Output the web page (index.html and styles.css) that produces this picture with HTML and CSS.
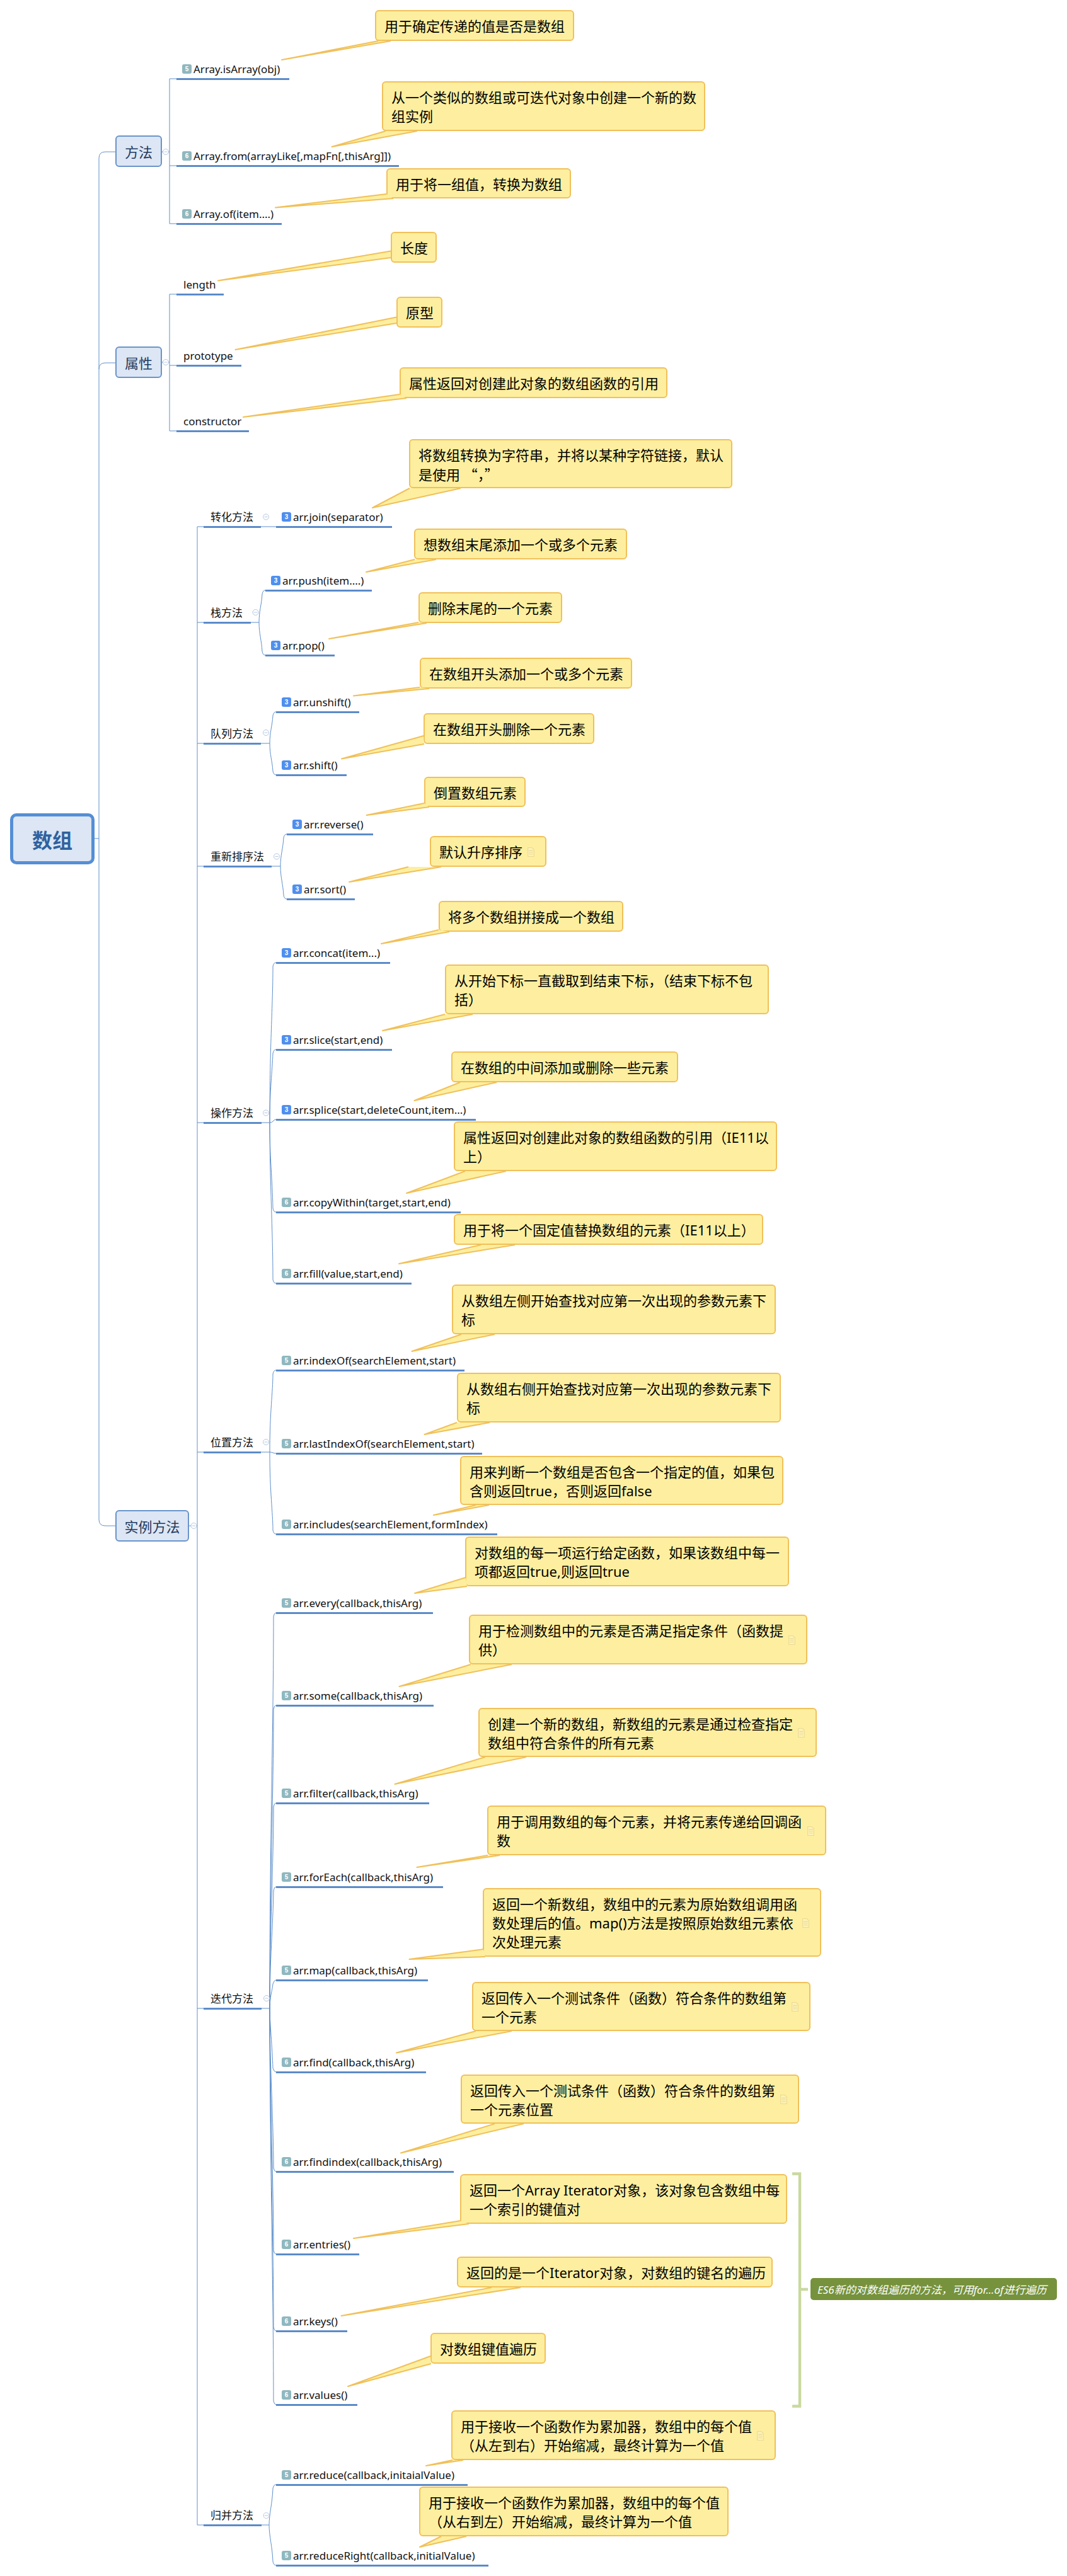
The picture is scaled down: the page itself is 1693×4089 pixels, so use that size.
FILE: index.html
```html
<!DOCTYPE html>
<html lang="zh-CN">
<head>
<meta charset="utf-8">
<title>数组</title>
<link rel="stylesheet" href="styles.css">
</head>
<body>
<main class="canvas">
<svg class="layer" width="1693" height="4089" viewBox="0 0 1693 4089">
<g class="conn">
<path d="M183 241H167Q157 241 157 251V2412Q157 2422 167 2422H183"/>
<path d="M157 586Q157 576 167 576H183"/>
<path d="M150 1331H157"/>
<path d="M257 241H269M280 125H269V355H280M269 263H280"/>
<path d="M257 575H269M280 467H269V684H280M269 580H280"/>
<path d="M300 2422H313M313 836V4008"/>
<path d="M313 836H323M313 988H323M313 1180H323M313 1375H323M313 1782H323M313 2305H323M313 3188H323M313 4008H323"/>
<path d="M414 836H438"/>
<path d="M398 988H411"/>
<path d="M411 988C411 970 415 960 416 943Q417 937 421 937M411 988C411 1006 415 1016 416 1034Q417 1040 421 1040"/>
<path d="M414 1180H428"/>
<path d="M428 1180C428 1162 432 1152 433 1136Q434 1130 438 1130M428 1180C428 1198 432 1208 433 1224Q434 1230 438 1230"/>
<path d="M431 1375H445"/>
<path d="M445 1375C445 1357 449 1347 450 1330Q451 1324 455 1324M445 1375C445 1393 449 1403 450 1421Q451 1427 455 1427"/>
<path d="M414 1782H428"/>
<path d="M428 1782C428 1650 433 1600 433 1534Q434 1528 438 1528M428 1782C428 1730 432 1700 433 1672Q434 1666 438 1666M428 1782Q431 1782 433 1780Q435 1777 438 1777M428 1782C428 1840 432 1870 433 1918Q434 1924 438 1924M428 1782C428 1880 433 1950 433 2031Q434 2037 438 2037"/>
<path d="M414 2305H428"/>
<path d="M428 2305C428 2240 433 2210 433 2181Q434 2175 438 2175M428 2305Q431 2305 433 2306Q435 2307 438 2307M428 2305C428 2370 433 2400 433 2429Q434 2435 438 2435"/>
<path d="M415 3188H428"/>
<path d="M428 3188C428 2900 434 2750 434 2566Q435 2560 438 2560M428 3188C428 3000 434 2850 434 2713Q435 2707 438 2707M428 3188C428 3060 434 2960 434 2868Q435 2862 438 2862M428 3188C428 3110 433 3060 434 3001Q435 2995 438 2995M428 3188C428 3170 432 3160 433 3149Q435 3143 438 3143M428 3188C428 3210 432 3250 433 3283Q435 3289 438 3289M428 3188C428 3280 434 3370 434 3441Q435 3447 438 3447M428 3188C428 3320 434 3460 434 3572Q435 3578 438 3578M428 3188C428 3360 434 3560 434 3694Q435 3700 438 3700M428 3188C428 3400 434 3650 434 3811Q435 3817 438 3817"/>
<path d="M415 4008H427"/>
<path d="M427 4008C427 3990 432 3975 433 3950Q434 3944 438 3944M427 4008C427 4026 432 4041 433 4066Q434 4072 438 4072"/>
</g>
<g class="coll">
<circle cx="263" cy="241" r="4.5"/><path d="M260.5 241h5"/>
<circle cx="263" cy="575" r="4.5"/><path d="M260.5 575h5"/>
<circle cx="307.500" cy="2422" r="4.5"/><path d="M305 2422h5"/>
<circle cx="422" cy="820.500" r="4.5"/><path d="M419.500 820.500h5"/>
<circle cx="405.500" cy="972" r="4.5"/><path d="M403 972h5"/>
<circle cx="422" cy="1163" r="4.5"/><path d="M419.500 1163h5"/>
<circle cx="439" cy="1359.500" r="4.5"/><path d="M436.500 1359.500h5"/>
<circle cx="422" cy="1766.500" r="4.5"/><path d="M419.500 1766.500h5"/>
<circle cx="422" cy="2289" r="4.5"/><path d="M419.500 2289h5"/>
<circle cx="423" cy="3172" r="4.5"/><path d="M420.500 3172h5"/>
<circle cx="422.500" cy="3993" r="4.5"/><path d="M420 3993h5"/>
</g>
<path class="brace" d="M1257 3450.500H1269V3819.500H1257M1269 3634H1282"/>
</svg>

<div class="root" style="left:16px;top:1291px;width:134px;height:81px">数组</div>
<div class="top" style="left:183px;top:215px;width:74px;height:50px">方法</div>
<div class="top" style="left:183px;top:550px;width:74px;height:50px">属性</div>
<div class="top" style="left:183px;top:2397px;width:117px;height:50px">实例方法</div>

<div class="lbl" style="left:280px;top:95px;width:179px"><i class="bdg teal">5</i>Array.isArray(obj)</div>
<div class="lbl" style="left:280px;top:233px;width:353px"><i class="bdg teal">6</i>Array.from(arrayLike[,mapFn[,thisArg]])</div>
<div class="lbl" style="left:280px;top:325px;width:167px"><i class="bdg teal">6</i>Array.of(item....)</div>
<div class="lbl plain" style="left:280px;top:437px;width:75px">length</div>
<div class="lbl plain" style="left:280px;top:550px;width:103px">prototype</div>
<div class="lbl plain" style="left:280px;top:654px;width:115px">constructor</div>

<div class="lbl plain" style="left:323px;top:806px;width:91px">转化方法</div>
<div class="lbl" style="left:438px;top:806px;width:184px"><i class="bdg blue">3</i>arr.join(separator)</div>
<div class="lbl plain" style="left:323px;top:958px;width:75px">栈方法</div>
<div class="lbl" style="left:421px;top:907px;width:169px"><i class="bdg blue">3</i>arr.push(item....)</div>
<div class="lbl" style="left:421px;top:1010px;width:110px"><i class="bdg blue">3</i>arr.pop()</div>
<div class="lbl plain" style="left:323px;top:1150px;width:91px">队列方法</div>
<div class="lbl" style="left:438px;top:1100px;width:132px"><i class="bdg blue">3</i>arr.unshift()</div>
<div class="lbl" style="left:438px;top:1200px;width:112px"><i class="bdg blue">3</i>arr.shift()</div>
<div class="lbl plain" style="left:323px;top:1345px;width:108px">重新排序法</div>
<div class="lbl" style="left:455px;top:1294px;width:137px"><i class="bdg blue">3</i>arr.reverse()</div>
<div class="lbl" style="left:455px;top:1397px;width:108px"><i class="bdg blue">3</i>arr.sort()</div>
<div class="lbl plain" style="left:323px;top:1752px;width:92px">操作方法</div>
<div class="lbl" style="left:438px;top:1498px;width:181px"><i class="bdg blue">3</i>arr.concat(item...)</div>
<div class="lbl" style="left:438px;top:1636px;width:184px"><i class="bdg blue">3</i>arr.slice(start,end)</div>
<div class="lbl" style="left:438px;top:1747px;width:317px"><i class="bdg blue">3</i>arr.splice(start,deleteCount,item...)</div>
<div class="lbl" style="left:438px;top:1894px;width:293px"><i class="bdg teal">6</i>arr.copyWithin(target,start,end)</div>
<div class="lbl" style="left:438px;top:2007px;width:215px"><i class="bdg teal">6</i>arr.fill(value,start,end)</div>
<div class="lbl plain" style="left:323px;top:2275px;width:91px">位置方法</div>
<div class="lbl" style="left:438px;top:2145px;width:299px"><i class="bdg teal">5</i>arr.indexOf(searchElement,start)</div>
<div class="lbl" style="left:438px;top:2277px;width:327px"><i class="bdg teal">5</i>arr.lastIndexOf(searchElement,start)</div>
<div class="lbl" style="left:438px;top:2405px;width:351px"><i class="bdg teal">6</i>arr.includes(searchElement,formIndex)</div>
<div class="lbl plain" style="left:323px;top:3158px;width:92px">迭代方法</div>
<div class="lbl" style="left:438px;top:2530px;width:249px"><i class="bdg teal">5</i>arr.every(callback,thisArg)</div>
<div class="lbl" style="left:438px;top:2677px;width:250px"><i class="bdg teal">5</i>arr.some(callback,thisArg)</div>
<div class="lbl" style="left:438px;top:2832px;width:243px"><i class="bdg teal">5</i>arr.filter(callback,thisArg)</div>
<div class="lbl" style="left:438px;top:2965px;width:265px"><i class="bdg teal">5</i>arr.forEach(callback,thisArg)</div>
<div class="lbl" style="left:438px;top:3113px;width:241px"><i class="bdg teal">5</i>arr.map(callback,thisArg)</div>
<div class="lbl" style="left:438px;top:3259px;width:238px"><i class="bdg teal">6</i>arr.find(callback,thisArg)</div>
<div class="lbl" style="left:438px;top:3417px;width:282px"><i class="bdg teal">6</i>arr.findindex(callback,thisArg)</div>
<div class="lbl" style="left:438px;top:3548px;width:132px"><i class="bdg teal">6</i>arr.entries()</div>
<div class="lbl" style="left:438px;top:3670px;width:113px"><i class="bdg teal">6</i>arr.keys()</div>
<div class="lbl" style="left:438px;top:3787px;width:129px"><i class="bdg teal">6</i>arr.values()</div>
<div class="lbl plain" style="left:323px;top:3978px;width:92px">归并方法</div>
<div class="lbl" style="left:438px;top:3914px;width:304px"><i class="bdg teal">5</i>arr.reduce(callback,initaialValue)</div>
<div class="lbl" style="left:438px;top:4042px;width:337px"><i class="bdg teal">5</i>arr.reduceRight(callback,initialValue)</div>

<div class="box" style="left:595px;top:16px;width:316px;height:49px">用于确定传递的值是否是数组</div>
<div class="box" style="left:606px;top:129px;width:513px;height:79px">从一个类似的数组或可迭代对象中创建一个新的数<br>组实例</div>
<div class="box" style="left:613px;top:267px;width:293px;height:48px">用于将一组值，转换为数组</div>
<div class="box" style="left:620px;top:368px;width:73px;height:49px">长度</div>
<div class="box" style="left:629px;top:471px;width:73px;height:49px">原型</div>
<div class="box" style="left:634px;top:583px;width:425px;height:49px">属性返回对创建此对象的数组函数的引用</div>
<div class="box" style="left:649px;top:697px;width:513px;height:78px">将数组转换为字符串，并将以某种字符链接，默认<br>是使用 <span class="cjk">“，”</span></div>
<div class="box" style="left:657px;top:839px;width:338px;height:49px">想数组末尾添加一个或多个元素</div>
<div class="box" style="left:664px;top:940px;width:228px;height:49px">删除末尾的一个元素</div>
<div class="box" style="left:666px;top:1044px;width:337px;height:49px">在数组开头添加一个或多个元素</div>
<div class="box" style="left:672px;top:1132px;width:271px;height:49px">在数组开头删除一个元素</div>
<div class="box" style="left:673px;top:1233px;width:161px;height:48px">倒置数组元素</div>
<div class="box" style="left:682px;top:1327px;width:185px;height:49px">默认升序排序<svg class="note" viewBox="0 0 10 14"><path d="M.5.5H6.500L9.500 3.500V13.500H.5ZM2 5H8M2 7.500H8M2 10H8"/></svg></div>
<div class="box" style="left:696px;top:1430px;width:293px;height:49px">将多个数组拼接成一个数组</div>
<div class="box" style="left:706px;top:1531px;width:514px;height:79px">从开始下标一直截取到结束下标，（结束下标不包<br>括）</div>
<div class="box" style="left:716px;top:1669px;width:360px;height:49px">在数组的中间添加或删除一些元素</div>
<div class="box" style="left:720px;top:1780px;width:513px;height:79px">属性返回对创建此对象的数组函数的引用（IE11以<br>上）</div>
<div class="box" style="left:720px;top:1927px;width:491px;height:49px">用于将一个固定值替换数组的元素（IE11以上）</div>
<div class="box" style="left:717px;top:2039px;width:514px;height:79px">从数组左侧开始查找对应第一次出现的参数元素下<br>标</div>
<div class="box" style="left:725px;top:2179px;width:514px;height:79px">从数组右侧开始查找对应第一次出现的参数元素下<br>标</div>
<div class="box" style="left:730px;top:2311px;width:513px;height:78px">用来判断一个数组是否包含一个指定的值，如果包<br>含则返回true，否则返回false</div>
<div class="box" style="left:738px;top:2439px;width:514px;height:79px">对数组的每一项运行给定函数，如果该数组中每一<br>项都返回true,则返回true</div>
<div class="box" style="left:744px;top:2563px;width:537px;height:79px">用于检测数组中的元素是否满足指定条件（函数提<br>供）<svg class="note" viewBox="0 0 10 14"><path d="M.5.5H6.500L9.500 3.500V13.500H.5ZM2 5H8M2 7.500H8M2 10H8"/></svg></div>
<div class="box" style="left:759px;top:2711px;width:537px;height:78px">创建一个新的数组，新数组的元素是通过检查指定<br>数组中符合条件的所有元素<svg class="note" viewBox="0 0 10 14"><path d="M.5.5H6.500L9.500 3.500V13.500H.5ZM2 5H8M2 7.500H8M2 10H8"/></svg></div>
<div class="box" style="left:773px;top:2866px;width:538px;height:79px">用于调用数组的每个元素，并将元素传递给回调函<br>数<svg class="note" viewBox="0 0 10 14"><path d="M.5.5H6.500L9.500 3.500V13.500H.5ZM2 5H8M2 7.500H8M2 10H8"/></svg></div>
<div class="box" style="left:766px;top:2997px;width:537px;height:109px">返回一个新数组，数组中的元素为原始数组调用函<br>数处理后的值。map()方法是按照原始数组元素依<br>次处理元素<svg class="note" viewBox="0 0 10 14"><path d="M.5.5H6.500L9.500 3.500V13.500H.5ZM2 5H8M2 7.500H8M2 10H8"/></svg></div>
<div class="box" style="left:749px;top:3146px;width:537px;height:78px">返回传入一个测试条件（函数）符合条件的数组第<br>一个元素<svg class="note" viewBox="0 0 10 14"><path d="M.5.5H6.500L9.500 3.500V13.500H.5ZM2 5H8M2 7.500H8M2 10H8"/></svg></div>
<div class="box" style="left:731px;top:3293px;width:537px;height:78px">返回传入一个测试条件（函数）符合条件的数组第<br>一个元素位置<svg class="note" viewBox="0 0 10 14"><path d="M.5.5H6.500L9.500 3.500V13.500H.5ZM2 5H8M2 7.500H8M2 10H8"/></svg></div>
<div class="box" style="left:730px;top:3451px;width:519px;height:79px">返回一个Array Iterator对象，该对象包含数组中每<br>一个索引的键值对</div>
<div class="box" style="left:725px;top:3582px;width:501px;height:49px">返回的是一个Iterator对象，对数组的键名的遍历</div>
<div class="box" style="left:683px;top:3703px;width:183px;height:49px">对数组键值遍历</div>
<div class="box" style="left:716px;top:3826px;width:515px;height:79px">用于接收一个函数作为累加器，数组中的每个值<br>（从左到右）开始缩减，最终计算为一个值<svg class="note" viewBox="0 0 10 14"><path d="M.5.5H6.500L9.500 3.500V13.500H.5ZM2 5H8M2 7.500H8M2 10H8"/></svg></div>
<div class="box" style="left:665px;top:3947px;width:491px;height:79px">用于接收一个函数作为累加器，数组中的每个值<br>（从右到左）开始缩减，最终计算为一个值</div>

<div class="summary" style="left:1286px;top:3616px;width:391px;height:35px">ES6新的对数组遍历的方法，可用for...of进行遍历</div>

<svg class="layer" width="1693" height="4089" viewBox="0 0 1693 4089">
<g class="tail">
<path d="M600 65L447 95L620 65"/>
<path d="M612 208L526.500 233L662 208"/>
<path d="M613 308L437 329.500L624 315"/>
<path d="M620 398.500L346 445.500L620 409"/>
<path d="M629 503.500L373.500 555L629 513"/>
<path d="M634 626L386 662L645 632"/>
<path d="M650 775L591 806L731 775"/>
<path d="M658 888L581 908L692 888"/>
<path d="M664 988L522 1014L677 989"/>
<path d="M666 1091L561 1104.500L681 1093"/>
<path d="M672 1168L542 1204.500L673 1181"/>
<path d="M673 1275L581.500 1294L681 1281"/>
<path d="M648 1376L554 1400L700 1376"/>
<path d="M696 1476L605 1498L713 1479"/>
<path d="M706 1610L607 1636L750 1610"/>
<path d="M730 1718L657.500 1747L788 1718"/>
<path d="M738 1859L645 1894L803 1859"/>
<path d="M763 1976L633 2006L817 1976"/>
<path d="M732 2118L653.500 2145L785 2118"/>
<path d="M725 2258L673.500 2277L777 2258"/>
<path d="M755 2389L688 2405L776 2389"/>
<path d="M739 2504L658 2529L741 2518"/>
<path d="M747 2642L633.500 2677L812 2642"/>
<path d="M770 2789L626.500 2832L835 2789"/>
<path d="M774 2945L661.500 2964L793 2945"/>
<path d="M767 3094L649.500 3110L770 3106"/>
<path d="M755 3224L629 3258.500L812 3224"/>
<path d="M785 3371L636 3417.500L831 3371"/>
<path d="M731 3525L561 3553L744 3530"/>
<path d="M780 3631L541.500 3676L826 3631"/>
<path d="M683 3740L552 3788L684 3752"/>
<path d="M718 3905L676 3914L735 3905"/>
<path d="M700 4026L666 4043L740 4026"/>
</g>
</svg>
</main>
</body>
</html>
```
FILE: styles.css
```css
* { box-sizing: border-box; }
html, body { margin: 0; padding: 0; background: #fff; }
.canvas {
  position: relative;
  width: 1693px;
  height: 4089px;
  overflow: hidden;
  font-family: "Noto Sans", "Noto Sans CJK SC", sans-serif;
  color: #111;
}
.layer { position: absolute; left: 0; top: 0; pointer-events: none; }
.conn path { fill: none; stroke: #5f90cc; stroke-width: 1; }
.coll circle { fill: #fff; stroke: #b5c7df; stroke-width: 1; }
.coll path { fill: none; stroke: #b5c7df; stroke-width: 1; }
.brace { fill: none; stroke: #c9d9a0; stroke-width: 4.5; }
.tail path { fill: #fdef9f; stroke: #f1c05a; stroke-width: 2; stroke-linejoin: round; }

.root, .top {
  position: absolute;
  display: flex;
  align-items: center;
  justify-content: center;
  background: #dce6f4;
  white-space: nowrap;
}
.root {
  border: 5px solid #558ed5;
  border-radius: 10px;
  font-size: 32px;
  font-weight: 700;
  color: #2f629f;
}
.top {
  border: 2px solid #6a94cb;
  border-radius: 6px;
  font-size: 22px;
  color: #1f3a60;
}

.lbl {
  position: absolute;
  height: 32px;
  display: flex;
  align-items: center;
  padding-left: 9px;
  border-bottom: 3px solid #5b8bc9;
  font-size: 17px;
  line-height: 24px;
  white-space: nowrap;
  color: #111;
}
.lbl.plain { padding-left: 11px; }
.bdg {
  flex: none;
  width: 15px;
  height: 15px;
  margin-right: 3px;
  border-radius: 3px;
  color: #fff;
  font: 700 10px/15px "Liberation Sans", sans-serif;
  text-align: center;
}
.bdg.teal { background: #8fb8bf; }
.bdg.blue { background: #4f8fef; }

.box {
  position: absolute;
  display: block;
  padding: 8px 0 0 13px;
  background: #fdef9f;
  border: 2px solid #f1c05a;
  border-radius: 6px;
  font-size: 22px;
  line-height: 30px;
  white-space: nowrap;
  color: #000;
}
.cjk { font-family: "Noto Sans CJK SC", sans-serif; }
.note {
  position: absolute;
  right: 17px;
  top: 50%;
  width: 11px;
  height: 15px;
  margin-top: -7px;
}
.note path { fill: #fdf2b5; stroke: #ecd992; stroke-width: 1; }

.summary {
  position: absolute;
  padding-left: 11px;
  display: flex;
  align-items: center;
  background: #76923c;
  border-radius: 5px;
  color: #fff;
  font-size: 17px;
  font-style: italic;
  white-space: nowrap;
}
```
